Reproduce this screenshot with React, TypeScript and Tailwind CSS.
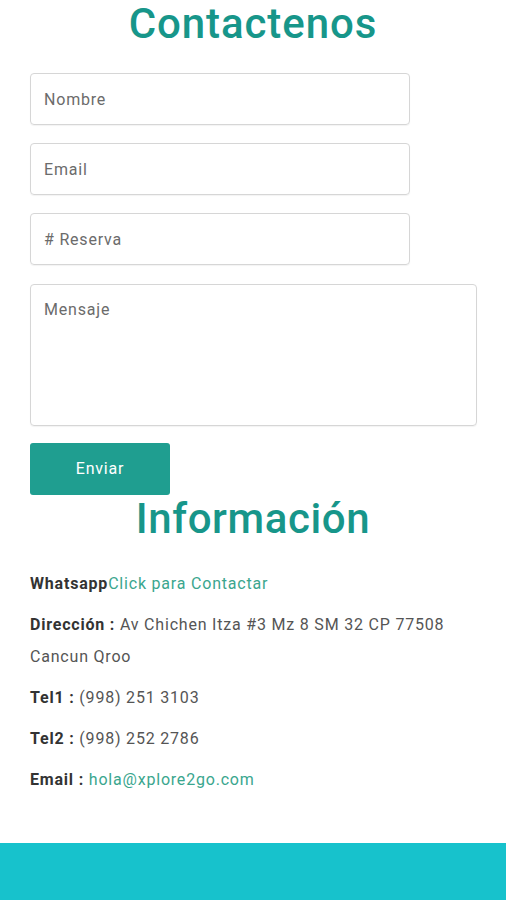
import React from "react";

export default function App() {
  return (
    <div className="w-[506px] h-[900px] bg-white flex flex-col overflow-hidden" style={{ fontFamily: "Roboto, 'Liberation Sans', sans-serif" }}>
      <div className="px-[30px] flex-1">
        <h1 className="text-center text-[42px] leading-[48px] font-medium tracking-[0.9px] text-[#17968a]">Contactenos</h1>
        <div className="mt-[25px] flex flex-col">
          <input placeholder="Nombre" className="w-[380px] h-[52px] border border-[#d6d6d6] rounded-[4px] px-[13px] text-[16px] tracking-[0.8px] text-[#555] placeholder:text-[#6b6b6b] outline-none shadow-[0_1px_1px_rgba(0,0,0,0.05)]" />
          <input placeholder="Email" className="mt-[18px] w-[380px] h-[52px] border border-[#d6d6d6] rounded-[4px] px-[13px] text-[16px] tracking-[0.8px] text-[#555] placeholder:text-[#6b6b6b] outline-none shadow-[0_1px_1px_rgba(0,0,0,0.05)]" />
          <input placeholder="# Reserva" className="mt-[18px] w-[380px] h-[52px] border border-[#d6d6d6] rounded-[4px] px-[13px] text-[16px] tracking-[0.8px] text-[#555] placeholder:text-[#6b6b6b] outline-none shadow-[0_1px_1px_rgba(0,0,0,0.05)]" />
          <textarea placeholder="Mensaje" className="mt-[19px] w-[447px] h-[142px] border border-[#d6d6d6] rounded-[4px] px-[13px] py-[15px] text-[16px] leading-[20px] tracking-[0.8px] text-[#555] placeholder:text-[#6b6b6b] outline-none resize-none shadow-[0_1px_1px_rgba(0,0,0,0.05)]" />
          <button className="mt-[17px] w-[140px] h-[52px] bg-[#1f9e90] rounded-[3px] text-white text-[16px] tracking-[0.8px]">Enviar</button>
        </div>
        <h2 className="text-center text-[42px] leading-[48px] font-medium tracking-[0.6px] text-[#17968a]">Información</h2>
        <div className="mt-[25px] text-[16px] tracking-[0.8px] text-[#555] leading-[32px] flex flex-col gap-[9px]">
          <p><span className="font-bold text-[#333]">Whatsapp</span><span className="text-[#3aa68e]">Click para Contactar</span></p>
          <p><span className="font-bold text-[#333]">Dirección :</span> Av Chichen Itza #3 Mz 8 SM 32 CP 77508 Cancun Qroo</p>
          <p><span className="font-bold text-[#333]">Tel1 :</span> (998) 251 3103</p>
          <p><span className="font-bold text-[#333]">Tel2 :</span> (998) 252 2786</p>
          <p><span className="font-bold text-[#333]">Email :</span> <span className="text-[#3aa68e]">hola@xplore2go.com</span></p>
        </div>
      </div>
      <div className="h-[57px] bg-[#17c2cc] shrink-0" />
    </div>
  );
}
